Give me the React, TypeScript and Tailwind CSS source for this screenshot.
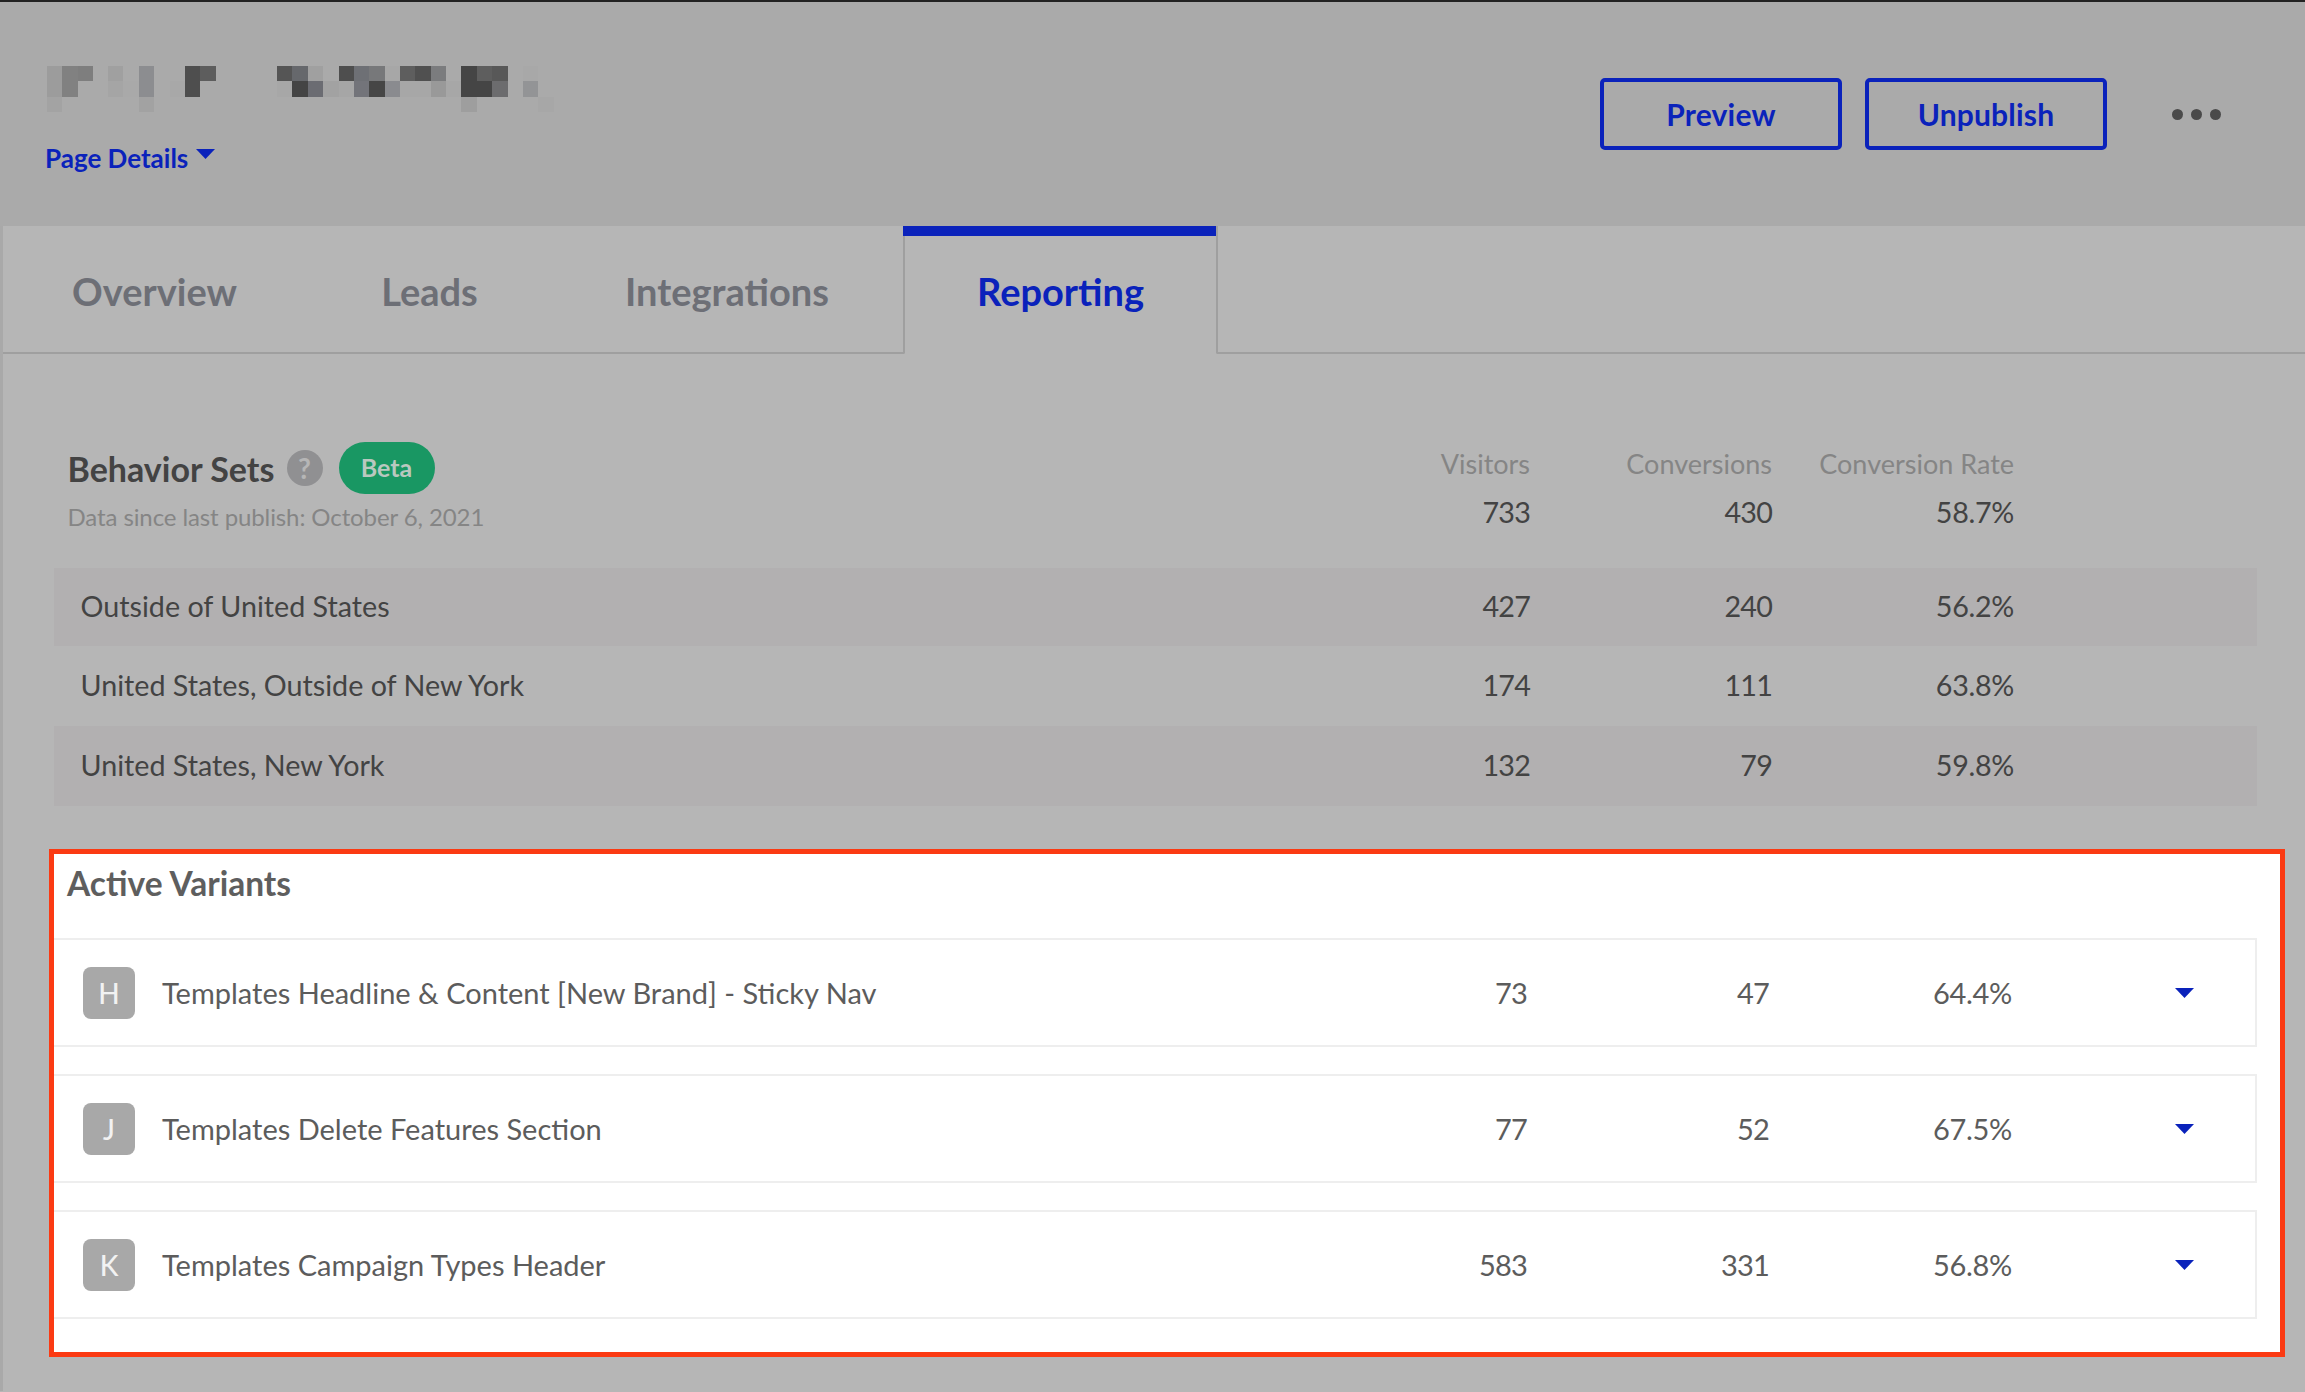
import React from "react";

const FONT = "font-['Lato','Noto_Sans',sans-serif]";

const COLS = [47, 62.3, 77.6, 93, 108, 123.3, 139, 154, 170, 185, 200, 216, 231, 246, 262, 277, 292, 308, 323, 339, 354, 369, 385, 400, 415, 431, 446, 461, 477, 492, 508, 523, 538, 554];
const CELLS: [number, number, string][] = [
  [0, 0, "#9c9c9c"], [0, 1, "#9c9c9c"], [0, 2, "#a3a3a3"],
  [1, 0, "#818181"], [1, 1, "#818181"], [2, 0, "#7e7e7e"],
  [4, 0, "#a0a0a0"], [4, 1, "#a5a5a5"], [5, 1, "#a9a9a9"],
  [6, 0, "#8c8d90"], [6, 1, "#8c8d90"], [6, 2, "#a2a2a2"],
  [8, 1, "#a8a8a8"], [9, 0, "#4e4e4e"], [9, 1, "#4e4e4e"], [10, 0, "#5d5d5d"],
  [15, 0, "#555555"], [15, 1, "#a7a7a7"], [16, 0, "#66686c"], [16, 1, "#444444"],
  [17, 0, "#a0a0a0"], [17, 1, "#6b6c72"], [18, 1, "#a2a2a2"],
  [19, 0, "#4e4e4e"], [19, 1, "#a6a6a6"], [20, 0, "#6e7075"], [20, 1, "#73747a"],
  [21, 0, "#77787a"], [21, 1, "#464646"], [22, 0, "#a7a7a7"], [22, 1, "#8a8b8f"],
  [23, 0, "#5e5e5e"], [23, 1, "#a7a7a7"], [24, 0, "#505050"], [24, 1, "#a7a7a7"],
  [25, 0, "#7b7c7e"], [25, 1, "#999999"], [26, 1, "#a7a7a7"],
  [27, 0, "#454545"], [27, 1, "#454545"], [27, 2, "#9e9e9e"],
  [28, 0, "#5e5e5e"], [28, 1, "#454545"], [29, 0, "#585858"], [29, 1, "#6c6c6e"],
  [31, 0, "#a8a8a8"], [31, 1, "#939496"], [32, 2, "#a7a7a7"],
];
const ROWS = [0, 15, 31, 46];

function Mosaic() {
  return (
    <svg width="510" height="46" viewBox="47 0 510 46" shapeRendering="crispEdges" className="block">
      {CELLS.map(([c, r, fill], i) => (
        <rect key={i} x={COLS[c]} y={ROWS[r]} width={COLS[c + 1] - COLS[c]} height={ROWS[r + 1] - ROWS[r]} fill={fill} />
      ))}
    </svg>
  );
}

function Caret({ className }: { className: string }) {
  return (
    <svg width="19" height="10" viewBox="0 0 19 10" className={className}>
      <path d="M0 0H19L9.5 10Z" fill="#0a22bb" />
    </svg>
  );
}

const GRID = "grid grid-cols-[1fr_120px_242px_242px_243px] items-center";
const NUM = "text-right tracking-[-0.8px]";
const PCT = "text-right tracking-[-0.3px]";

const behaviour = [
  ["Outside of United States", "427", "240", "56.2%", "h-[78px] bg-[#b2b0b1]"],
  ["United States, Outside of New York", "174", "111", "63.8%", "h-[80px]"],
  ["United States, New York", "132", "79", "59.8%", "h-[80px] bg-[#b2b0b1]"],
];

const variants = [
  ["H", "Templates Headline & Content [New Brand] - Sticky Nav", "73", "47", "64.4%", "mb-[27px]"],
  ["J", "Templates Delete Features Section", "77", "52", "67.5%", "mb-[27px]"],
  ["K", "Templates Campaign Types Header", "583", "331", "56.8%", "mb-[33px]"],
];

export default function App() {
  return (
    <div className={`${FONT} min-h-[1392px] w-full bg-[#b6b6b6]`}>
      <div className="h-[2px] bg-[#222222]" />

      <header className="flex h-[224px] justify-between bg-[#aaaaaa] pl-[47px] pr-[84px]">
        <div className="flex flex-col">
          <div className="mt-[64px]">
            <Mosaic />
          </div>
          <div className="mt-[31px] -ml-[2px] flex items-start gap-[8px]">
            <span className="text-[26px] leading-[30px] font-bold text-[#0a22bb]">Page Details</span>
            <Caret className="mt-[6px]" />
          </div>
        </div>
        <div className="flex items-center gap-[23px]">
          <button className="h-[72px] w-[242px] rounded-[5px] border-[4px] border-[#0a22bb] text-[30px] leading-[60px] font-bold tracking-[0.2px] text-[#0a22bb]">Preview</button>
          <button className="h-[72px] w-[242px] rounded-[5px] border-[4px] border-[#0a22bb] text-[30px] leading-[60px] font-bold tracking-[0.2px] text-[#0a22bb]">Unpublish</button>
          <div className="ml-[42px] flex gap-[8px]">
            <span className="size-[11px] rounded-full bg-[#4a4a4a]" />
            <span className="size-[11px] rounded-full bg-[#4a4a4a]" />
            <span className="size-[11px] rounded-full bg-[#4a4a4a]" />
          </div>
        </div>
      </header>

      <div className="border-l-[3px] border-[#a9a9a9]">
        <nav className="flex h-[128px] text-[38px] font-bold text-[#6d6f76]">
          <div className="-mr-[2px] flex w-[902px] items-center rounded-br-[2px] border-r-2 border-b-2 border-[#9f9f9f] pt-[4px]">
            <span className="flex w-[303px] justify-center">Overview</span>
            <span className="flex w-[247px] justify-center">Leads</span>
            <span className="flex w-[348px] justify-center">Integrations</span>
          </div>
          <div className="flex w-[315px] items-center justify-center border-t-[10px] border-[#0a22bb] pb-[8px] text-[#0a22bb]">Reporting</div>
          <div className="-ml-[2px] flex-1 rounded-bl-[2px] border-b-2 border-l-2 border-[#9f9f9f]" />
        </nav>

        <main className="pb-[34px] pl-[46px] pr-[20px] pt-[88px]">
          <div className="pl-[4.5px] pr-[28px] text-[28.7px] text-[#434343]">
            <div className="grid h-[126px] grid-cols-[1fr_120px_242px_242px_243px] items-start">
              <div className="pl-[14px]">
                <div className="flex h-[52px] items-center">
                  <h2 className="w-[219px] shrink-0 text-[34px] font-bold whitespace-nowrap text-[#434343]">Behavior Sets</h2>
                  <span className="flex size-[36px] items-center justify-center rounded-full bg-[#909092] text-[28px] font-bold text-[#b6b6b6]">?</span>
                  <span className="ml-[16px] flex h-[52px] w-[96px] items-center justify-center rounded-full bg-[#199763] text-[25px] font-bold text-[#b9c8bf]">Beta</span>
                </div>
                <p className="mt-[5px] text-[24px] leading-[36px] tracking-[-0.1px] text-[#858585]">Data since last publish: October 6, 2021</p>
              </div>
              {[["Visitors", "733", NUM], ["Conversions", "430", NUM], ["Conversion Rate", "58.7%", PCT]].map(([h, v, cls]) => (
                <div key={h} className="text-right whitespace-nowrap">
                  <div className="h-[44px] text-[27px] leading-[44px] text-[#858585]">{h}</div>
                  <div className={`h-[48px] leading-[52px] ${cls}`}>{v}</div>
                </div>
              ))}
              <div />
            </div>
            {behaviour.map(([name, a, b, c, cls]) => (
              <div key={name} className={`${GRID} ${cls}`}>
                <span className="pl-[27px]">{name}</span>
                <span className={NUM}>{a}</span>
                <span className={NUM}>{b}</span>
                <span className={PCT}>{c}</span>
                <span />
              </div>
            ))}
          </div>

          <section className="mt-[43px] border-[5px] border-[#fb3a13] bg-white pr-[23px] text-[29px] text-[#5c5c5c]">
            <h2 className="h-[84px] pl-[13px] text-[33.5px] leading-[59px] font-bold text-[#5e5e5e]">Active Variants</h2>
            {variants.map(([letter, name, a, b, c, mb]) => (
              <div key={letter} className={`grid h-[109px] grid-cols-[1fr_120px_242px_243px_243px] items-center border-y-2 border-r-2 border-[#eeeeee] ${mb}`}>
                <div className="flex items-center pl-[29px]">
                  <span className="flex size-[52px] items-center justify-center rounded-[8px] bg-[#a8a8a8] text-[28px] font-medium text-[#f2f2f2]">{letter}</span>
                  <span className="ml-[27px] whitespace-nowrap">{name}</span>
                </div>
                <span className={NUM}>{a}</span>
                <span className={NUM}>{b}</span>
                <span className={PCT}>{c}</span>
                <span className="pl-[163px]">
                  <Caret className="block" />
                </span>
              </div>
            ))}
          </section>
        </main>
      </div>
    </div>
  );
}
